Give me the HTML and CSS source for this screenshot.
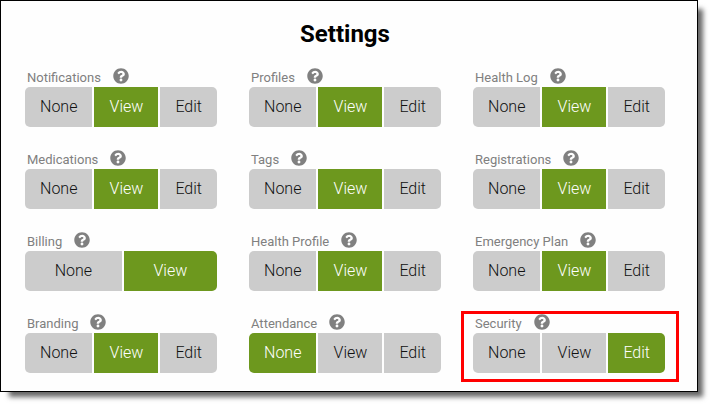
FILE: index.html
```
<!DOCTYPE html>
<html lang="en">
<head>
    <meta charset="UTF-8">
    <meta name="viewport" content="width=device-width, initial-scale=1.0">
    <title>Settings</title>
    <link rel="stylesheet" href="styles.css">
</head>
<body>
    <!-- Shared help icon -->
    <svg class="sprite" width="0" height="0" aria-hidden="true">
        <symbol id="help" viewBox="0 0 512 512">
            <path fill="currentColor" d="M504 256c0 136.997-111.043 248-248 248S8 392.997 8 256C8 119.083 119.043 8 256 8s248 111.083 248 248zM262.655 90c-54.497 0-89.255 22.957-116.549 63.758-3.536 5.286-2.353 12.415 2.715 16.258l34.699 26.31c5.205 3.947 12.621 3.008 16.665-2.122 17.864-22.658 30.113-35.797 57.303-35.797 20.429 0 45.698 13.148 45.698 32.958 0 14.976-12.363 22.667-32.534 33.976C247.128 238.528 216 254.941 216 296v4c0 6.627 5.373 12 12 12h56c6.627 0 12-5.373 12-12v-1.333c0-28.462 83.186-29.647 83.186-106.667 0-58.002-60.165-102-116.531-102zM256 338c-25.365 0-46 20.635-46 46 0 25.364 20.635 46 46 46s46-20.636 46-46c0-25.364-20.635-46-46-46z"/>
        </symbol>
    </svg>

    <main class="panel">
        <h1>Settings</h1>
        <div class="settings-grid">
            <div class="setting" role="group" aria-labelledby="notifications">
                <div class="setting-head">
                    <span class="setting-label" id="notifications">Notifications</span>
                    <button type="button" class="help" aria-label="Help for Notifications"><svg><use href="#help"/></svg></button>
                </div>
                <div class="options">
                    <button type="button" aria-pressed="false">None</button>
                    <button type="button" aria-pressed="true" class="active">View</button>
                    <button type="button" aria-pressed="false">Edit</button>
                </div>
            </div>

            <div class="setting" role="group" aria-labelledby="profiles">
                <div class="setting-head">
                    <span class="setting-label" id="profiles">Profiles</span>
                    <button type="button" class="help" aria-label="Help for Profiles"><svg><use href="#help"/></svg></button>
                </div>
                <div class="options">
                    <button type="button" aria-pressed="false">None</button>
                    <button type="button" aria-pressed="true" class="active">View</button>
                    <button type="button" aria-pressed="false">Edit</button>
                </div>
            </div>

            <div class="setting" role="group" aria-labelledby="health-log">
                <div class="setting-head">
                    <span class="setting-label" id="health-log">Health Log</span>
                    <button type="button" class="help" aria-label="Help for Health Log"><svg><use href="#help"/></svg></button>
                </div>
                <div class="options">
                    <button type="button" aria-pressed="false">None</button>
                    <button type="button" aria-pressed="true" class="active">View</button>
                    <button type="button" aria-pressed="false">Edit</button>
                </div>
            </div>

            <div class="setting" role="group" aria-labelledby="medications">
                <div class="setting-head">
                    <span class="setting-label" id="medications">Medications</span>
                    <button type="button" class="help" aria-label="Help for Medications"><svg><use href="#help"/></svg></button>
                </div>
                <div class="options">
                    <button type="button" aria-pressed="false">None</button>
                    <button type="button" aria-pressed="true" class="active">View</button>
                    <button type="button" aria-pressed="false">Edit</button>
                </div>
            </div>

            <div class="setting" role="group" aria-labelledby="tags">
                <div class="setting-head">
                    <span class="setting-label" id="tags">Tags</span>
                    <button type="button" class="help" aria-label="Help for Tags"><svg><use href="#help"/></svg></button>
                </div>
                <div class="options">
                    <button type="button" aria-pressed="false">None</button>
                    <button type="button" aria-pressed="true" class="active">View</button>
                    <button type="button" aria-pressed="false">Edit</button>
                </div>
            </div>

            <div class="setting" role="group" aria-labelledby="registrations">
                <div class="setting-head">
                    <span class="setting-label" id="registrations">Registrations</span>
                    <button type="button" class="help" aria-label="Help for Registrations"><svg><use href="#help"/></svg></button>
                </div>
                <div class="options">
                    <button type="button" aria-pressed="false">None</button>
                    <button type="button" aria-pressed="true" class="active">View</button>
                    <button type="button" aria-pressed="false">Edit</button>
                </div>
            </div>

            <!-- Billing has no edit level -->
            <div class="setting" role="group" aria-labelledby="billing">
                <div class="setting-head">
                    <span class="setting-label" id="billing">Billing</span>
                    <button type="button" class="help" aria-label="Help for Billing"><svg><use href="#help"/></svg></button>
                </div>
                <div class="options">
                    <button type="button" aria-pressed="false">None</button>
                    <button type="button" aria-pressed="true" class="active">View</button>
                </div>
            </div>

            <div class="setting" role="group" aria-labelledby="health-profile">
                <div class="setting-head">
                    <span class="setting-label" id="health-profile">Health Profile</span>
                    <button type="button" class="help" aria-label="Help for Health Profile"><svg><use href="#help"/></svg></button>
                </div>
                <div class="options">
                    <button type="button" aria-pressed="false">None</button>
                    <button type="button" aria-pressed="true" class="active">View</button>
                    <button type="button" aria-pressed="false">Edit</button>
                </div>
            </div>

            <div class="setting" role="group" aria-labelledby="emergency-plan">
                <div class="setting-head">
                    <span class="setting-label" id="emergency-plan">Emergency Plan</span>
                    <button type="button" class="help" aria-label="Help for Emergency Plan"><svg><use href="#help"/></svg></button>
                </div>
                <div class="options">
                    <button type="button" aria-pressed="false">None</button>
                    <button type="button" aria-pressed="true" class="active">View</button>
                    <button type="button" aria-pressed="false">Edit</button>
                </div>
            </div>

            <div class="setting" role="group" aria-labelledby="branding">
                <div class="setting-head">
                    <span class="setting-label" id="branding">Branding</span>
                    <button type="button" class="help" aria-label="Help for Branding"><svg><use href="#help"/></svg></button>
                </div>
                <div class="options">
                    <button type="button" aria-pressed="false">None</button>
                    <button type="button" aria-pressed="true" class="active">View</button>
                    <button type="button" aria-pressed="false">Edit</button>
                </div>
            </div>

            <div class="setting" role="group" aria-labelledby="attendance">
                <div class="setting-head">
                    <span class="setting-label" id="attendance">Attendance</span>
                    <button type="button" class="help" aria-label="Help for Attendance"><svg><use href="#help"/></svg></button>
                </div>
                <div class="options">
                    <button type="button" aria-pressed="true" class="active">None</button>
                    <button type="button" aria-pressed="false">View</button>
                    <button type="button" aria-pressed="false">Edit</button>
                </div>
            </div>

            <div class="setting highlighted" role="group" aria-labelledby="security">
                <div class="setting-head">
                    <span class="setting-label" id="security">Security</span>
                    <button type="button" class="help" aria-label="Help for Security"><svg><use href="#help"/></svg></button>
                </div>
                <div class="options">
                    <button type="button" aria-pressed="false">None</button>
                    <button type="button" aria-pressed="false">View</button>
                    <button type="button" aria-pressed="true" class="active">Edit</button>
                </div>
            </div>
        </div>
    </main>
</body>
</html>
```
FILE: styles.css
```
* {
    box-sizing: border-box;
}

body {
    font-family: Roboto, "Liberation Sans", sans-serif;
    background-color: #fff;
    margin: 0;
    padding: 0 15px 15px 0; /* Room for the panel shadow */
}

.sprite {
    position: absolute;
}

.panel {
    background-color: #fefefe;
    border: 1px solid #000;
    padding: 17px 32px 18px 24px;
    box-shadow: 7px 7px 5px -2px rgba(0, 0, 0, 0.6);
}

h1 {
    margin: 0 0 17px;
    font-size: 24px;
    line-height: 32px;
    font-weight: 700;
    text-align: center;
    color: #000;
}

.settings-grid {
    display: grid;
    grid-template-columns: repeat(3, 1fr);
    gap: 22px 32px;
}

.setting-head {
    display: flex;
    align-items: center;
    gap: 12px;
    height: 18px;
    margin-bottom: 2px;
    padding-left: 2px;
}

.setting-label {
    font-size: 13px;
    line-height: 16px;
    padding-top: 4px;
    color: #808080;
}

.help {
    display: flex;
    padding: 0;
    border: none;
    background: none;
    color: #808080;
    cursor: pointer;
}

.help svg {
    width: 16px;
    height: 16px;
}

/* Segmented buttons */
.options {
    display: flex;
    gap: 2px;
    border-radius: 5px;
    overflow: hidden;
}

.options button {
    flex: 1 1 auto;
    height: 40px;
    padding: 0 8px 2px;
    border: none;
    background-color: #ccc;
    color: #111;
    font-family: inherit;
    font-size: 16px;
    font-weight: 300;
    cursor: pointer;
}

.options .active {
    background-color: #6d981e;
    color: #fff;
}

/* Red frame drawn around a setting */
.highlighted {
    position: relative;
}

.highlighted::after {
    content: "";
    position: absolute;
    inset: -2px -14px -9px -12px;
    border: 3px solid #f00;
    pointer-events: none;
}
```
